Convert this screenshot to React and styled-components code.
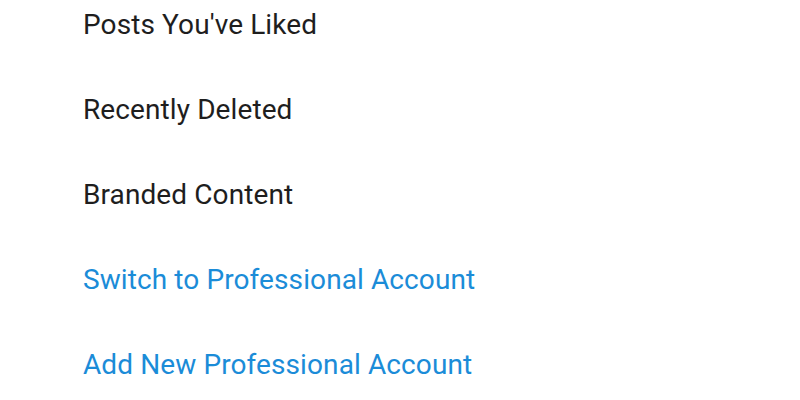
import React from 'react'
import styled, { createGlobalStyle } from 'styled-components'

const GlobalStyle = createGlobalStyle`
    html, body {
        margin: 0;
        padding: 0;
        background: #ffffff;
    }
    body {
        font-family: Roboto, "Noto Sans", sans-serif;
    }
`

const Menu = styled.ul`
    list-style: none;
    margin: 0;
    padding: 7px 0 0 83px;
    display: flex;
    flex-direction: column;
    gap: 50px;
    width: 800px;
    height: 400px;
    box-sizing: border-box;
    overflow: hidden;
`

const Item = styled.li`
    font-size: 28px;
    line-height: 35px;
    letter-spacing: 0.1px;
    color: ${props => (props.$accent ? '#1b8cd8' : '#1e1e1e')};
    white-space: nowrap;
    cursor: pointer;
`

const items = [
    { label: "Posts You've Liked" },
    { label: 'Recently Deleted' },
    { label: 'Branded Content' },
    { label: 'Switch to Professional Account', accent: true },
    { label: 'Add New Professional Account', accent: true },
]

function App() {
    return (
        <>
            <GlobalStyle />
            <Menu>
                {items.map(item => (
                    <Item key={item.label} $accent={item.accent}>
                        {item.label}
                    </Item>
                ))}
            </Menu>
        </>
    )
}

export default App
